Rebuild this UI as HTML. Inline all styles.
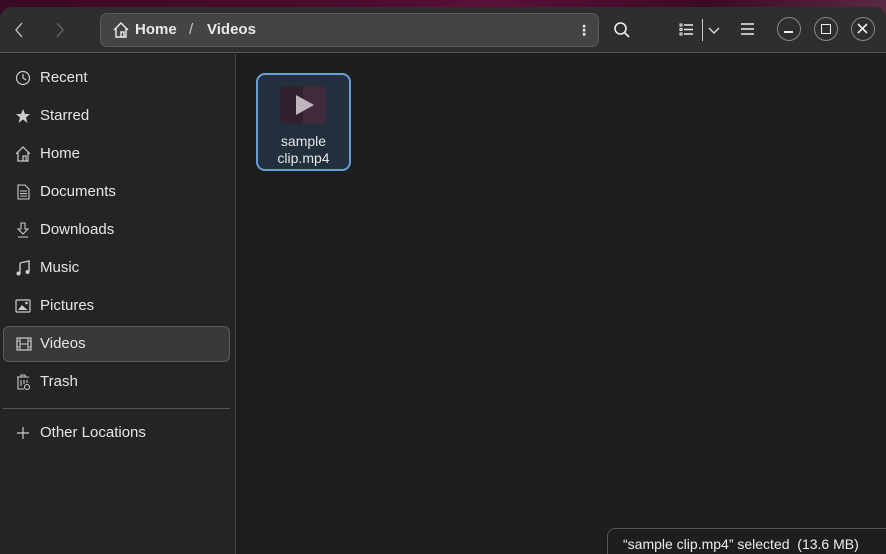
<!DOCTYPE html>
<html><head><meta charset="utf-8"><style>
*{margin:0;padding:0;box-sizing:border-box}
body{width:886px;height:554px;overflow:hidden;background:linear-gradient(90deg,#3a0a24,#4a0c2e 40%,#5a1038 55%,#3a0a26 80%,#5a2a44);font-family:"Liberation Sans","DejaVu Sans",sans-serif;color:#e8e8e8;position:relative}
.win{position:absolute;left:0;top:7px;width:886px;height:547px;background:#1e1e1e;border-radius:12px 12px 0 0;overflow:hidden}
.hdr{position:absolute;left:0;top:0;width:886px;height:46px;background:#2e2e2e;border-bottom:1px solid #555}
.side{position:absolute;left:0;top:47px;width:236px;height:500px;background:#242424;border-right:1px solid #444}
.item{position:absolute;left:0;height:36px;width:236px;font-size:15px;line-height:36px;padding-left:40px;color:#e6e6e6}
.item svg{position:absolute;left:15px;top:10px}
.sel{left:3px;width:227px;background:#383838;border:1px solid #5c5c5c;border-radius:6px;padding-left:36px;line-height:34px}
.sel svg{left:12px;top:9px}
.path{position:absolute;left:100px;top:6px;width:499px;height:34px;background:#444;border:1px solid #5a5a5a;border-radius:7px;font-weight:bold;font-size:15px;line-height:32px}
.cb{position:absolute;top:10px;width:24px;height:24px;border:1.5px solid #888;border-radius:50%}
.file{position:absolute;left:256px;top:66px;width:95px;height:98px;background:#22303e;border:2px solid #6b9fd4;border-radius:9px;text-align:center;font-size:14px;line-height:17px;padding-top:58px;color:#e6e6e6}
.status{position:absolute;left:607px;top:521px;width:290px;height:40px;background:#1e1e1e;border:1px solid #555;border-radius:8px;font-size:14px;padding:7px 0 0 15px;color:#eee}
</style></head><body>
<div class="win">
<div class="hdr">
<svg style="position:absolute;left:13px;top:15px" width="12" height="16"><path d="M9 1 L3 8 L9 15" stroke="#ccc" stroke-width="1.3" fill="none"/></svg>
<svg style="position:absolute;left:54px;top:15px" width="12" height="16"><path d="M3 1 L9 8 L3 15" stroke="#666" stroke-width="1.3" fill="none"/></svg>
<div class="path">
<svg style="position:absolute;left:12px;top:8px" width="16" height="16"><path d="M1 8 L8 1 L15 8 M3 6 V15 H13 V6 M8 15 V10 H11 V15" stroke="#eee" stroke-width="1.4" fill="none"/></svg>
<span style="position:absolute;left:34px">Home</span>
<span style="position:absolute;left:88px;font-weight:normal;color:#ccc">/</span>
<span style="position:absolute;left:106px">Videos</span>
<span style="position:absolute;left:476px;top:0;font-size:14px">⋮</span>
</div>
<svg style="position:absolute;left:613px;top:14px" width="18" height="18"><circle cx="7.5" cy="7.5" r="5.5" stroke="#eee" stroke-width="1.6" fill="none"/><path d="M11.5 11.5 L16 16" stroke="#eee" stroke-width="1.8"/></svg>
<svg style="position:absolute;left:679px;top:16px" width="14" height="13"><path d="M1 1h2v2H1zM1 5.5h2v2H1zM1 10h2v2H1z" fill="none" stroke="#eee" stroke-width="1"/><path d="M5 2h9M5 6.5h9M5 11h9" stroke="#eee" stroke-width="1.4"/></svg>
<div style="position:absolute;left:702px;top:12px;width:1px;height:22px;background:#ccc"></div>
<svg style="position:absolute;left:708px;top:20px" width="12" height="8"><path d="M1 1 L6 6 L11 1" stroke="#ddd" stroke-width="1.4" fill="none"/></svg>
<svg style="position:absolute;left:741px;top:16px" width="14" height="12"><path d="M0 1h13M0 6h13M0 11h13" stroke="#eee" stroke-width="1.4"/></svg>
<div class="cb" style="left:777px"><div style="position:absolute;left:6px;top:13px;width:9px;height:1.6px;background:#eee"></div></div>
<div class="cb" style="left:814px"><div style="position:absolute;left:5.5px;top:5.5px;width:10px;height:10px;border:1.5px solid #eee"></div></div>
<div class="cb" style="left:851px"><svg style="position:absolute;left:5px;top:5px" width="11" height="11"><path d="M1 1L10 10M10 1L1 10" stroke="#eee" stroke-width="1.6"/></svg></div>
</div>
<div class="side">
<div class="item" style="top:6px"><svg width="16" height="16"><circle cx="8" cy="8" r="6.5" stroke="#ccc" stroke-width="1.2" fill="none"/><path d="M8 4V8L11 10" stroke="#ccc" stroke-width="1.2" fill="none"/></svg>Recent</div>
<div class="item" style="top:44px"><svg width="16" height="16"><path d="M8 1L10 6H15L11 9.5L12.5 15L8 11.5L3.5 15L5 9.5L1 6H6Z" fill="#ccc"/></svg>Starred</div>
<div class="item" style="top:82px"><svg width="16" height="16"><path d="M1 8L8 1L15 8M3 6V15H13V6M8 15V10H11V15" stroke="#ccc" stroke-width="1.2" fill="none"/></svg>Home</div>
<div class="item" style="top:120px"><svg width="16" height="16"><path d="M3 1H10L14 5V15H3Z M5 7H12M5 9.5H12M5 12H12" stroke="#ccc" stroke-width="1.1" fill="none"/></svg>Documents</div>
<div class="item" style="top:158px"><svg width="16" height="16"><path d="M6 1H10V7H13L8 12L3 7H6Z M3 15H13" stroke="#ccc" stroke-width="1.1" fill="none"/></svg>Downloads</div>
<div class="item" style="top:196px"><svg width="16" height="16"><path d="M5 3L14 1V12M5 3V14" stroke="#ccc" stroke-width="1.4" fill="none"/><circle cx="3.5" cy="13.5" r="2" fill="#ccc"/><circle cx="12.5" cy="12" r="2" fill="#ccc"/></svg>Music</div>
<div class="item" style="top:234px"><svg width="16" height="16"><rect x="1" y="2" width="14" height="12" rx="1" stroke="#ccc" stroke-width="1.2" fill="none"/><path d="M3 12L7 7L10 10L13 12Z" fill="#ccc"/><circle cx="11.5" cy="5" r="1.3" fill="#ccc"/></svg>Pictures</div>
<div class="item sel" style="top:272px"><svg width="16" height="16"><rect x="1" y="2" width="14" height="12" stroke="#ccc" stroke-width="1.2" fill="none"/><path d="M4 2V14M12 2V14M4 8H12M1 5H4M1 11H4M12 5H15M12 11H15" stroke="#ccc" stroke-width="1"/></svg>Videos</div>
<div class="item" style="top:310px"><svg width="16" height="16"><path d="M2 3H14M6 3V1H10V3M3 3V15H9M6 6V12M9 6V10M12 6V9" stroke="#ccc" stroke-width="1.1" fill="none"/><circle cx="12" cy="13" r="2.5" stroke="#ccc" stroke-width="1.1" fill="none"/></svg>Trash</div>
<div style="position:absolute;left:3px;top:354px;width:227px;height:1px;background:#555"></div>
<div class="item" style="top:361px"><svg width="16" height="16"><path d="M8 2V14M2 8H14" stroke="#ccc" stroke-width="1.2"/></svg>Other Locations</div>
</div>
<div class="file">
<div style="position:absolute;left:22px;top:11px;width:46px;height:38px;border-radius:5px;background:linear-gradient(90deg,#33202e 50%,#412a3c 50%)"></div>
<svg style="position:absolute;left:37px;top:19px" width="20" height="22"><path d="M1 1L19 11L1 21Z" fill="#c0b6c0"/></svg>
sample<br>clip.mp4</div>
<div class="status">“sample clip.mp4” selected&nbsp; (13.6 MB)</div>
</div>
</body></html>
